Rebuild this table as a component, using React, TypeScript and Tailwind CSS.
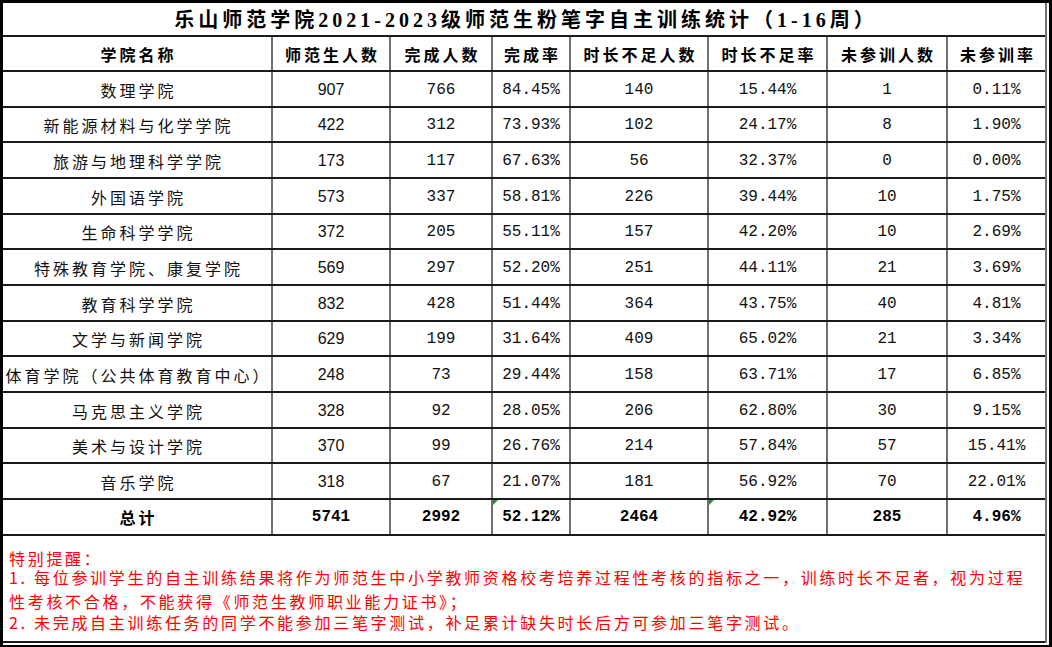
import React from "react";

const rows: string[][] = [
  ["数理学院", "907", "766", "84.45%", "140", "15.44%", "1", "0.11%"],
  ["新能源材料与化学学院", "422", "312", "73.93%", "102", "24.17%", "8", "1.90%"],
  ["旅游与地理科学学院", "173", "117", "67.63%", "56", "32.37%", "0", "0.00%"],
  ["外国语学院", "573", "337", "58.81%", "226", "39.44%", "10", "1.75%"],
  ["生命科学学院", "372", "205", "55.11%", "157", "42.20%", "10", "2.69%"],
  ["特殊教育学院、康复学院", "569", "297", "52.20%", "251", "44.11%", "21", "3.69%"],
  ["教育科学学院", "832", "428", "51.44%", "364", "43.75%", "40", "4.81%"],
  ["文学与新闻学院", "629", "199", "31.64%", "409", "65.02%", "21", "3.34%"],
  ["体育学院（公共体育教育中心）", "248", "73", "29.44%", "158", "63.71%", "17", "6.85%"],
  ["马克思主义学院", "328", "92", "28.05%", "206", "62.80%", "30", "9.15%"],
  ["美术与设计学院", "370", "99", "26.76%", "214", "57.84%", "57", "15.41%"],
  ["音乐学院", "318", "67", "21.07%", "181", "56.92%", "70", "22.01%"],
];

const total = ["总计", "5741", "2992", "52.12%", "2464", "42.92%", "285", "4.96%"];
const headers = ["学院名称", "师范生人数", "完成人数", "完成率", "时长不足人数", "时长不足率", "未参训人数", "未参训率"];

const colW = ["w-[270px]", "w-[118px]", "w-[102px]", "w-[78px]", "w-[138px]", "w-[119px]", "w-[120px]", "w-[97px]"];

const cjk = "font-['Noto_Sans_CJK_SC',sans-serif]";
const mono = "font-['Liberation_Mono','Noto_Sans_CJK_SC',monospace]";
const arial = "font-['Liberation_Sans','Noto_Sans_CJK_SC',sans-serif]";

function Cell({ i, children, className = "", tri = false }: { i: number; children: React.ReactNode; className?: string; tri?: boolean }) {
  return (
    <div
      className={`relative flex shrink-0 items-center justify-center whitespace-nowrap ${colW[i]} ${
        i < 7 ? "border-r-2 border-[#707070]" : ""
      } ${className}`}
    >
      {tri && (
        <span className="absolute left-0 top-0 h-0 w-0 border-r-[5px] border-t-[5px] border-r-transparent border-t-[#1a9a1a]" />
      )}
      {children}
    </div>
  );
}

export default function App() {
  return (
    <div className="h-[647px] w-[1052px] overflow-hidden border-b-2 border-l-[3px] border-r-[3px] border-t-[3px] border-black bg-white pb-[2px] text-black">
      <div className="flex h-[640px] w-[1044px] flex-col border-r-2 border-[#707070]">
        {/* title */}
        <div className="flex h-[34px] shrink-0 items-center justify-center border-b-2 border-[#1a1a1a] pl-[4px] pt-[1px]">
          <span className="font-['Liberation_Serif','Noto_Sans_CJK_SC',serif] text-[20px] font-bold tracking-[4px]">
            乐山师范学院2021-2023级师范生粉笔字自主训练统计（1-16周）
          </span>
        </div>
        {/* header */}
        <div className="flex h-[35px] shrink-0 border-b-2 border-[#1a1a1a]">
          {headers.map((h, i) => (
            <Cell key={i} i={i} className={`${cjk} pl-[3px] text-[16px] font-bold tracking-[3px]`}>
              {h}
            </Cell>
          ))}
        </div>
        {/* data */}
        {rows.map((r, ri) => (
          <div key={ri} className="flex h-[35.67px] shrink-0 border-b-2 border-[#1a1a1a]">
            {r.map((v, i) => (
              <Cell
                key={i}
                i={i}
                className={
                  i === 0
                    ? `${cjk} pl-[3px] pt-[2px] text-[16px] tracking-[3px] text-[#111]`
                    : i === 1
                    ? `${arial} pt-[2px] text-[16px] text-[#111]`
                    : `${mono} pt-[2px] text-[16px] text-[#111]`
                }
              >
                {v}
              </Cell>
            ))}
          </div>
        ))}
        {/* total */}
        <div className="flex h-[36px] shrink-0 border-b-2 border-[#1a1a1a]">
          {total.map((v, i) => (
            <Cell
              key={i}
              i={i}
              tri={i === 3 || i === 5}
              className={
                i === 0
                  ? `${cjk} pl-[3px] pt-[1px] text-[16px] font-bold tracking-[3px]`
                  : `${mono} pt-[1px] text-[16px] font-bold`
              }
            >
              {v}
            </Cell>
          ))}
        </div>
        {/* notes */}
        <div
          className={`flex-1 border-b-2 border-[#1a1a1a] pl-[6px] pt-[13px] ${cjk} text-[16px] leading-[19px] tracking-[2.7px] text-[#ff0000]`}
        >
          <div className="whitespace-nowrap">特别提醒：</div>
          <div className="whitespace-nowrap">
            1. 每位参训学生的自主训练结果将作为师范生中小学教师资格校考培养过程性考核的指标之一，训练时长不足者，视为过程
          </div>
          <div className="mt-[5px] whitespace-nowrap">性考核不合格，不能获得《师范生教师职业能力证书》；</div>
          <div className="mt-[2px] whitespace-nowrap">
            2. 未完成自主训练任务的同学不能参加三笔字测试，补足累计缺失时长后方可参加三笔字测试。
          </div>
        </div>
      </div>
    </div>
  );
}
